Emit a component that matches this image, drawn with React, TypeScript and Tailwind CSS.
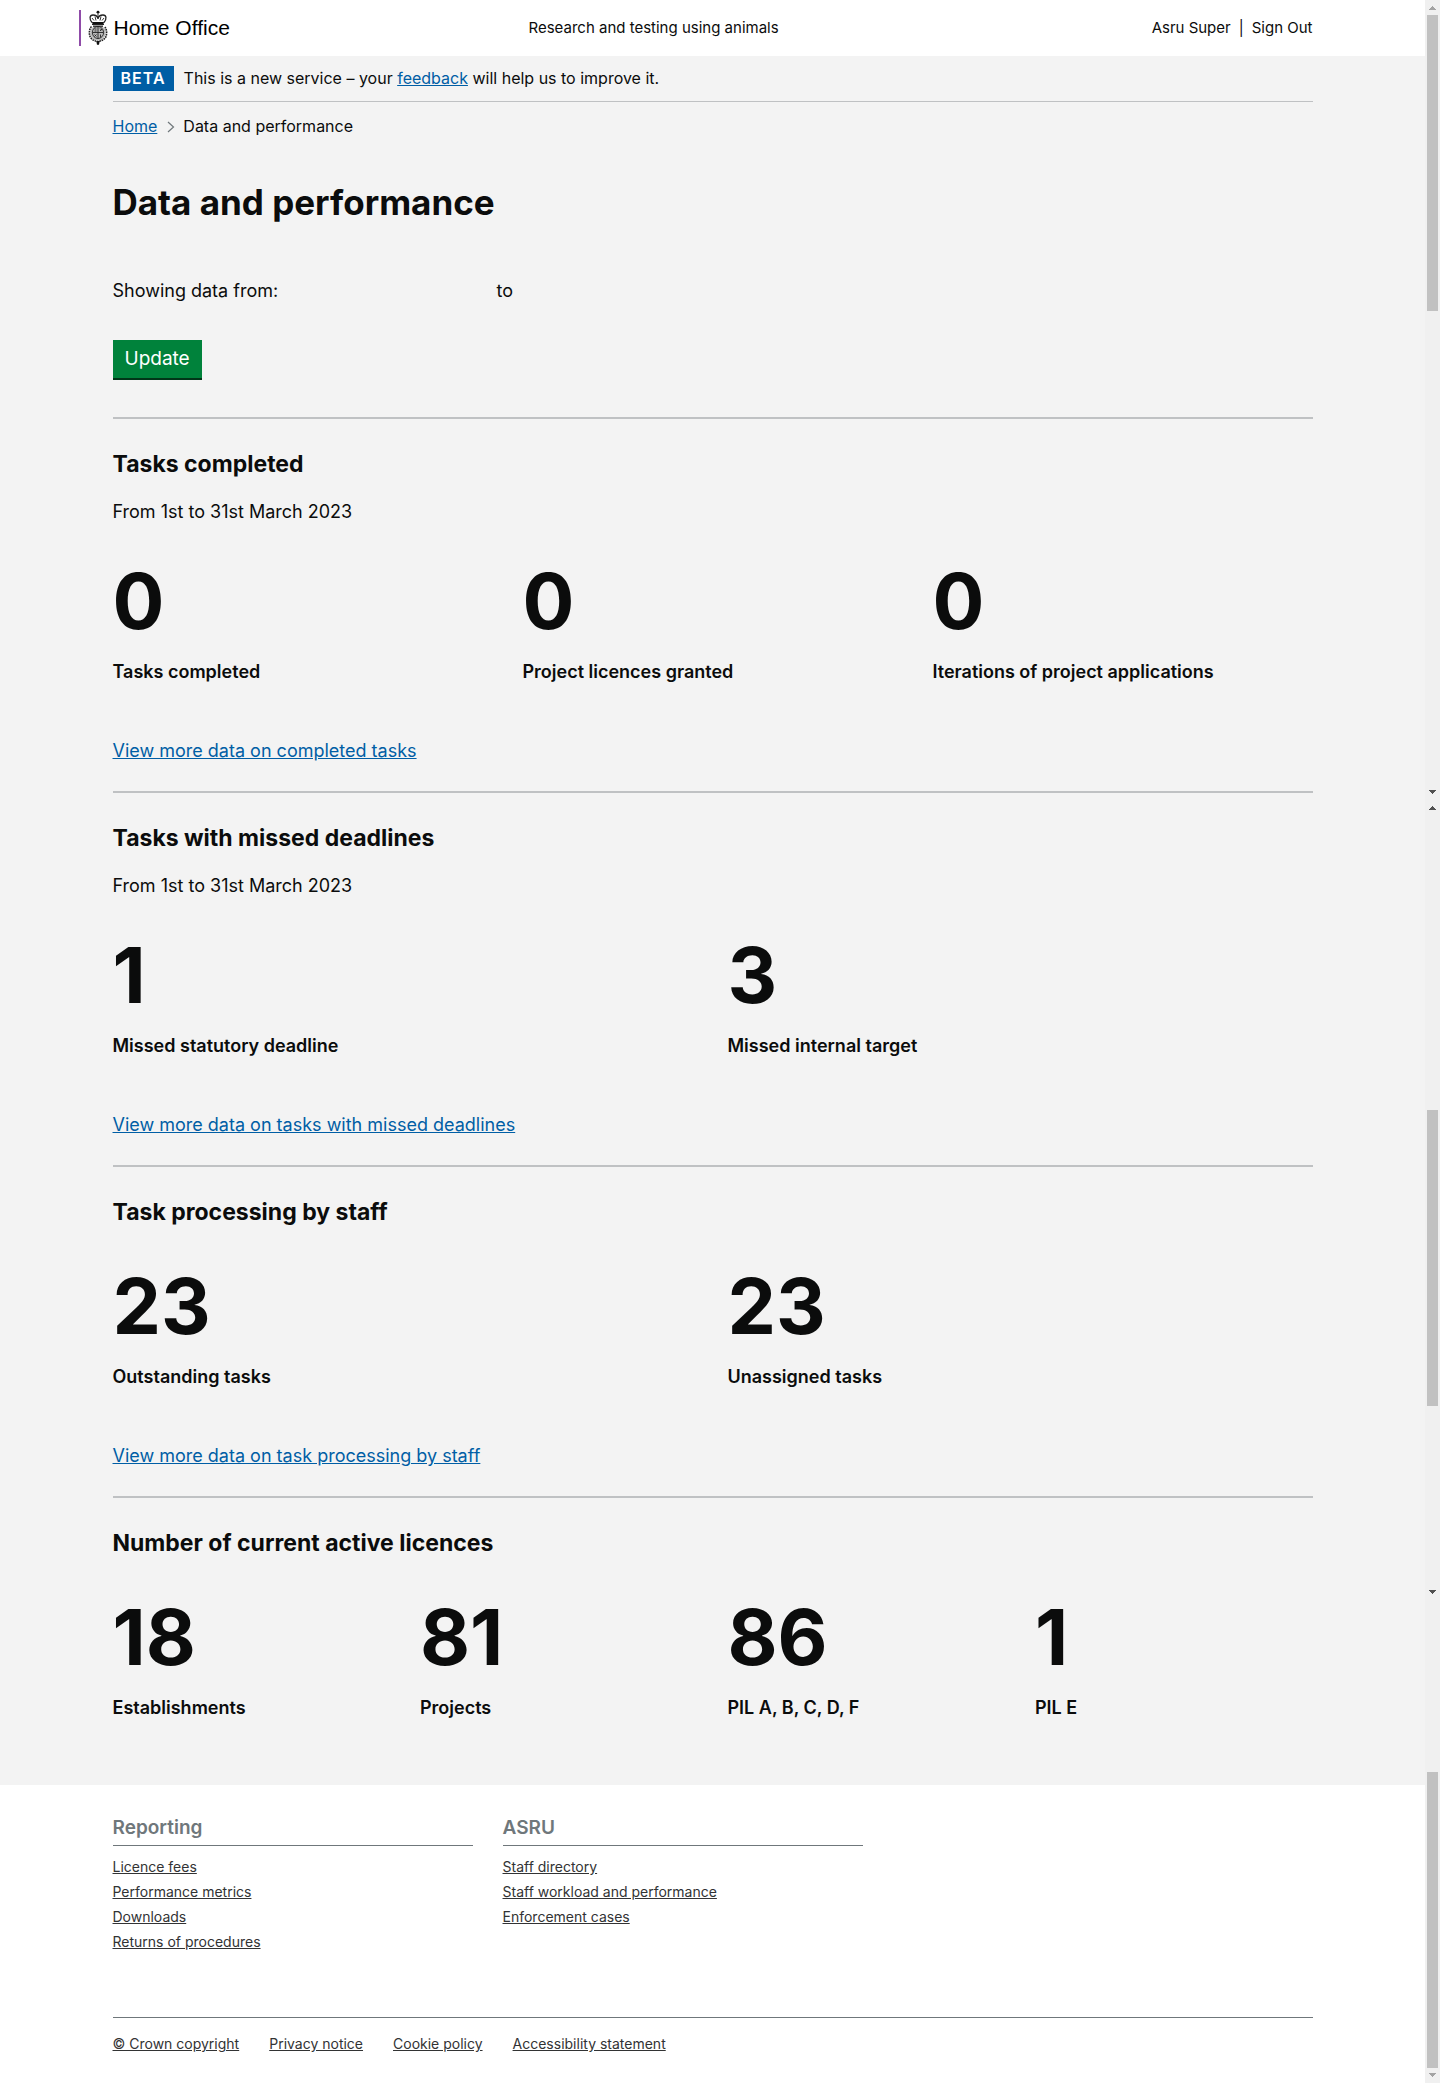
import { ReactNode } from "react";

type Stat = { value: string; label: string };

const linkClass = "text-[#005ea5] underline";
const footerLinkClass = "text-[#323334] underline";

function Crest() {
  return (
    <svg viewBox="0 0 20 36" className="h-9 w-5 shrink-0" aria-hidden="true">
      <path d="M5 14h10v3l2.500 2.500v6L14 30H6l-3.500-4.500v-6L5 17z" fill="#bbb" />
      <g fill="none" stroke="#222" strokeWidth="0.9">
        <path d="M4 12.500C1 9 1.500 5 5 5c3 0 4.500 1.500 5 3.500C10.500 6.500 12 5 15 5c3.500 0 4 4 1 7.500" strokeWidth="1.300" />
        <path d="M10 1v8M8.500 2.500h3M4 8l2 2.500M16 8l-2 2.500M7 6.500l1 4M13 6.500l-1 4" />
        <path d="M4 14.500h12M5 16.300h10" strokeWidth="1" />
        <ellipse cx="10" cy="22.500" rx="5.600" ry="6" />
        <path d="M10 16.500v12M4.500 22.500h11M6.500 19h2M6.500 21h2M12 18.500l2 2M12 21l2-2M6.500 24.500l2 2M12.500 24.500v3M6.500 26.500l2-2" />
        <path d="M3.500 16.500C1 19 .8 24.500 2.500 27.500c2 2.700 4.500 3.500 7.500 4 3-.5 5.500-1.300 7.500-4 1.700-3 1.500-8.500-1-11" strokeWidth="1.600" strokeDasharray="1.700 0.700" />
      </g>
      <path d="M4 12h12l-.5 2h-11zM8.600 2.100a1.400 1.400 0 1 1 2.800 0 1.400 1.400 0 1 1-2.800 0M8.300 31h3.400L11 34.700H9z" fill="#111" />
    </svg>
  );
}

function Arrow({ up, dim }: { up?: boolean; dim?: boolean }) {
  return (
    <svg viewBox="0 0 7 4" className="h-1 w-[7px] shrink-0" shapeRendering="crispEdges">
      <path d={up ? "M3 0h1v1h1v1h1v1h1v1H0V3h1V2h1V1h1z" : "M0 0h7v1H6v1H5v1H4v1H3V3H2V2H1V1H0z"} fill={dim ? "#a3a3a3" : "#505050"} />
    </svg>
  );
}

function ScrollTrack() {
  return (
    <div className="flex w-[15px] shrink-0 flex-col items-center bg-[#f0f0f0] pt-1.5" aria-hidden="true">
      <Arrow up dim />
      <div className="mt-[5px] h-[296px] w-[11px] shrink-0 bg-[#c1c1c1]" />
      <div className="h-[479px] shrink-0" />
      <Arrow />
      <div className="h-3 shrink-0" />
      <Arrow up />
      <div className="mt-[300px] h-[296px] w-[11px] shrink-0 bg-[#c1c1c1]" />
      <div className="h-[184px] shrink-0" />
      <Arrow />
      <div className="mt-[178px] h-[296px] w-[11px] shrink-0 bg-[#c1c1c1]" />
      <div className="h-[5px] shrink-0" />
      <Arrow dim />
    </div>
  );
}

function Container({ children }: { children: ReactNode }) {
  return <div className="mx-auto w-full max-w-[1200px]">{children}</div>;
}

function Stats({ items, columns }: { items: Stat[]; columns: string }) {
  return (
    <dl className={"grid gap-x-[30px] " + columns}>
      {items.map((s) => (
        <div key={s.label} className="flex flex-col-reverse">
          <dt className="mt-4 text-lg font-semibold leading-[30px]">{s.label}</dt>
          <dd className="text-[77px] font-bold leading-[80px]">{s.value}</dd>
        </div>
      ))}
    </dl>
  );
}

function Section({ title, period, items, columns, link }: {
  title: string; period?: string; items: Stat[]; columns: string; link?: string;
}) {
  return (
    <section className="border-t-2 border-[#bfc1c3] pt-[30px]">
      <h2 className="text-[23px] font-bold leading-[30px]">{title}</h2>
      {period && <p className="mt-[21px] text-lg leading-6">{period}</p>}
      <div className={period ? "mt-[37px]" : "mt-[39px]"}>
        <Stats items={items} columns={columns} />
      </div>
      {link && (
        <p className="mt-[50px] mb-[26px] text-lg leading-7">
          <a href="#" className={linkClass}>{link}</a>
        </p>
      )}
    </section>
  );
}

function FooterColumn({ title, links }: { title: string; links: string[] }) {
  return (
    <div>
      <h2 className="border-b border-[#6f777b] pb-1 text-[19px] font-semibold leading-[26px] text-[#6f777b]">{title}</h2>
      <ul className="mt-2 text-sm leading-[25px]">
        {links.map((l) => (
          <li key={l}><a href="#" className={footerLinkClass}>{l}</a></li>
        ))}
      </ul>
    </div>
  );
}

export default function App() {
  return (
    <div className="flex min-h-screen font-[Inter,sans-serif] text-[#0b0c0c]">
      <div className="flex min-w-0 flex-1 flex-col bg-white">
        <header className="h-14">
          <Container>
            <div className="grid h-14 grid-cols-[416px_1fr_auto] items-center text-[15px]">
              <a href="#" className="-ml-[34px] flex h-9 items-center border-l-2 border-[#8f4ba8] pl-[7px] font-['Liberation_Sans',sans-serif] text-[21px] text-black">
                <Crest />
                <span className="ml-1.5">Home Office</span>
              </a>
              <a href="#">Research and testing using animals</a>
              <nav className="flex gap-2">
                <a href="#">Asru Super</a>
                <span>|</span>
                <a href="#">Sign Out</a>
              </nav>
            </div>
          </Container>
        </header>

        <main className="bg-[#f3f3f3] pb-[62px]">
          <Container>
            <div className="flex items-center gap-2.5 border-b border-[#bfc1c3] py-2.5 text-base leading-[25px]">
              <strong className="bg-[#005ea5] px-2 font-semibold tracking-[1px] text-white">BETA</strong>
              <p>This is a new service – your <a href="#" className={linkClass}>feedback</a> will help us to improve it.</p>
            </div>
            <nav className="mt-3 flex items-center text-base leading-[25px]" aria-label="Breadcrumb">
              <a href="#" className={linkClass}>Home</a>
              <svg viewBox="0 0 8 12" className="ml-2.5 mr-2 h-3 w-2" fill="none" stroke="#6f777b" strokeWidth="1.200" aria-hidden="true">
                <path d="M1 1l5.500 5L1 11" />
              </svg>
              <span>Data and performance</span>
            </nav>
            <h1 className="mt-[41px] text-[35px] font-bold leading-[45px]">Data and performance</h1>

            <form onSubmit={(e) => e.preventDefault()}>
              <div className="mt-[52px] flex text-lg leading-7">
                <span className="w-96">Showing data from:</span>
                <span>to</span>
              </div>
              <button type="submit" className="mt-[35px] mb-[37px] block border-b-2 border-[#003618] bg-[#00823b] px-3 text-[19px] leading-[38px] text-white">Update</button>
            </form>

            <Section
              title="Tasks completed"
              period="From 1st to 31st March 2023"
              columns="grid-cols-3"
              items={[
                { value: "0", label: "Tasks completed" },
                { value: "0", label: "Project licences granted" },
                { value: "0", label: "Iterations of project applications" },
              ]}
              link="View more data on completed tasks"
            />
            <Section
              title="Tasks with missed deadlines"
              period="From 1st to 31st March 2023"
              columns="grid-cols-2"
              items={[
                { value: "1", label: "Missed statutory deadline" },
                { value: "3", label: "Missed internal target" },
              ]}
              link="View more data on tasks with missed deadlines"
            />
            <Section
              title="Task processing by staff"
              columns="grid-cols-2"
              items={[
                { value: "23", label: "Outstanding tasks" },
                { value: "23", label: "Unassigned tasks" },
              ]}
              link="View more data on task processing by staff"
            />
            <Section
              title="Number of current active licences"
              columns="grid-cols-4"
              items={[
                { value: "18", label: "Establishments" },
                { value: "81", label: "Projects" },
                { value: "86", label: "PIL A, B, C, D, F" },
                { value: "1", label: "PIL E" },
              ]}
            />
          </Container>
        </main>

        <footer className="pt-[30px] pb-[27px]">
          <Container>
            <div className="grid grid-cols-[360px_360px] gap-[30px]">
              <FooterColumn title="Reporting" links={["Licence fees", "Performance metrics", "Downloads", "Returns of procedures"]} />
              <FooterColumn title="ASRU" links={["Staff directory", "Staff workload and performance", "Enforcement cases"]} />
            </div>
            <ul className="mt-[63px] flex gap-[30px] border-t border-[#6f777b] pt-[13px] text-sm leading-[25px]">
              {["© Crown copyright", "Privacy notice", "Cookie policy", "Accessibility statement"].map((l) => (
                <li key={l}><a href="#" className={footerLinkClass}>{l}</a></li>
              ))}
            </ul>
          </Container>
        </footer>
      </div>
      <ScrollTrack />
    </div>
  );
}
